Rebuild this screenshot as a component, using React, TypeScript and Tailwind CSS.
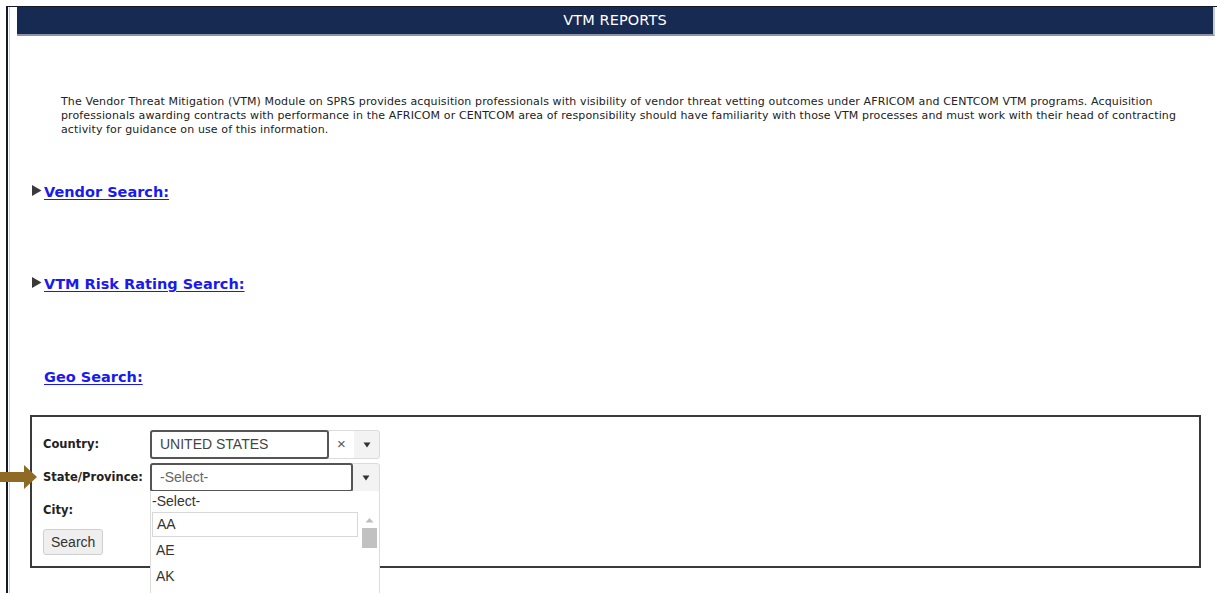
import React from "react";

const font = { fontFamily: '"DejaVu Sans", Verdana, sans-serif' };
const arial = { fontFamily: '"Liberation Sans", Arial, sans-serif' };

function Caret() {
  return (
    <svg width="8" height="6" viewBox="0 0 8 6" className="block">
      <path d="M0.5 0.5 L7.5 0.5 L4 5.5 Z" fill="#333" />
    </svg>
  );
}

function SectionLink({ label, arrow }: { label: string; arrow: boolean }) {
  return (
    <div className="flex items-center h-[20px]">
      <span className="w-[12px] flex items-center">
        {arrow && (
          <svg width="10" height="11" viewBox="0 0 10 11" className="block -mt-[3px]">
            <path d="M0 0 L9.5 5.5 L0 11 Z" fill="#3a3a3a" />
          </svg>
        )}
      </span>
      <a
        href="#"
        className="text-[14.5px] font-bold text-[#1a1aee] underline underline-offset-2 decoration-1 leading-none"
      >
        {label}
      </a>
    </div>
  );
}

export default function App() {
  const options = ["AA", "AE", "AK"];
  return (
    <div className="relative w-[1217px] h-[593px] overflow-hidden bg-white" style={font}>
      {/* pointer arrow in the left margin */}
      <svg className="absolute left-0 top-[465px]" width="38" height="24" viewBox="0 0 38 24">
        <path d="M0 7 H24 V0 L37 12 L24 24 V17 H0 Z" fill="#8f6a24" />
      </svg>

      <div className="ml-[6px] mt-[6px] h-[587px] border-l-2 border-t border-[#141a2b] pl-[1px]">
        <div className="h-full border-l border-[#c9ccd4] pl-[7px] pr-[2px]">
          {/* title bar */}
          <div className="h-[29px] bg-[#172a51] border-b-2 border-r-2 border-r-[#c6cbd6] border-b-[#8b94aa] flex items-center justify-center">
            <span className="text-white text-[14.5px] tracking-[0.1px]">VTM REPORTS</span>
          </div>

          {/* intro */}
          <p className="mt-[59px] ml-[44px] w-[1118px] text-[11px] leading-[14px] text-[#222] tracking-[0.12px]">
            The Vendor Threat Mitigation (VTM) Module on SPRS provides acquisition professionals with visibility of vendor threat vetting outcomes under AFRICOM and CENTCOM VTM programs. Acquisition professionals awarding contracts with performance in the AFRICOM or CENTCOM area of responsibility should have familiarity with those VTM processes and must work with their head of contracting activity for guidance on use of this information.
          </p>

          <div className="ml-[15px] mt-[45px]">
            <SectionLink label="Vendor Search:" arrow />
          </div>
          <div className="ml-[15px] mt-[72px]">
            <SectionLink label="VTM Risk Rating Search:" arrow />
          </div>
          <div className="ml-[15px] mt-[73px]">
            <SectionLink label="Geo Search:" arrow={false} />
          </div>

          {/* geo search form */}
          <div className="ml-[13px] mt-[28px] w-[1171px] h-[153px] border-2 border-[#3a3a3a] pl-[11px] pt-[13px]">
            <div className="flex items-center h-[29px]">
              <span className="w-[107px] text-[11.5px] font-bold text-[#222]">Country:</span>
              <div className="flex items-center h-[29px] w-[230px] rounded-[3px] border border-[#dcdcdc] bg-[#f3f3f3]">
                <div
                  className="h-[29px] w-[179px] -ml-px rounded-[3px] border-2 border-[#555] bg-white flex items-center pl-[8px] text-[14px] text-[#444]"
                  style={arial}
                >
                  UNITED STATES
                </div>
                <span className="w-[25px] text-center text-[15px] text-[#555] bg-white h-full flex items-center justify-center" style={arial}>
                  ×
                </span>
                <span className="flex-1 flex items-center justify-center">
                  <Caret />
                </span>
              </div>
            </div>

            <div className="flex items-center h-[29px] mt-[4px]">
              <span className="w-[107px] text-[11.5px] font-bold text-[#222]">State/Province:</span>
              <div className="relative flex items-center h-[29px] w-[230px] rounded-[3px] border border-[#dcdcdc] bg-[#f3f3f3]">
                <div
                  className="h-[29px] w-[203px] -ml-px rounded-[3px] border-2 border-[#555] bg-white flex items-center pl-[8px] text-[14px] text-[#666]"
                  style={arial}
                >
                  -Select-
                </div>
                <span className="flex-1 flex items-center justify-center">
                  <Caret />
                </span>

                {/* open option list */}
                <div
                  className="absolute left-[-1px] top-[27px] w-[230px] h-[120px] bg-white border-l border-r border-[#dcdcdc] z-10"
                  style={arial}
                >
                  <div className="h-[20px] text-[14px] text-[#333] leading-[20px] pl-[1px]">-Select-</div>
                  <div className="flex">
                    <div className="w-[208px]">
                      <div className="h-[25px] mt-[1px] border border-[#d8d8d8] ml-[1px] flex items-center pl-[4px] text-[14px] text-[#333]">
                        AA
                      </div>
                      {options.slice(1).map((o) => (
                        <div key={o} className="h-[26px] flex items-center pl-[5px] text-[14px] text-[#333]">
                          {o}
                        </div>
                      ))}
                    </div>
                    <div className="w-[20px] ml-[1px] flex flex-col items-center pt-[6px]">
                      <svg width="9" height="6" viewBox="0 0 9 6">
                        <path d="M0.5 5.5 L8.5 5.5 L4.5 1 Z" fill="#bdbdbd" />
                      </svg>
                      <div className="mt-[5px] w-[15px] h-[20px] bg-[#c1c1c1]" />
                    </div>
                  </div>
                </div>
              </div>
            </div>

            <div className="flex items-center h-[29px] mt-[4px]">
              <span className="w-[107px] text-[11.5px] font-bold text-[#222]">City:</span>
            </div>

            <button
              className="block mt-[4px] h-[26px] px-[7px] rounded-[3px] border border-[#cfcfcf] bg-[#efefef] text-[14px] text-[#333]"
              style={arial}
            >
              Search
            </button>
          </div>
        </div>
      </div>
    </div>
  );
}
